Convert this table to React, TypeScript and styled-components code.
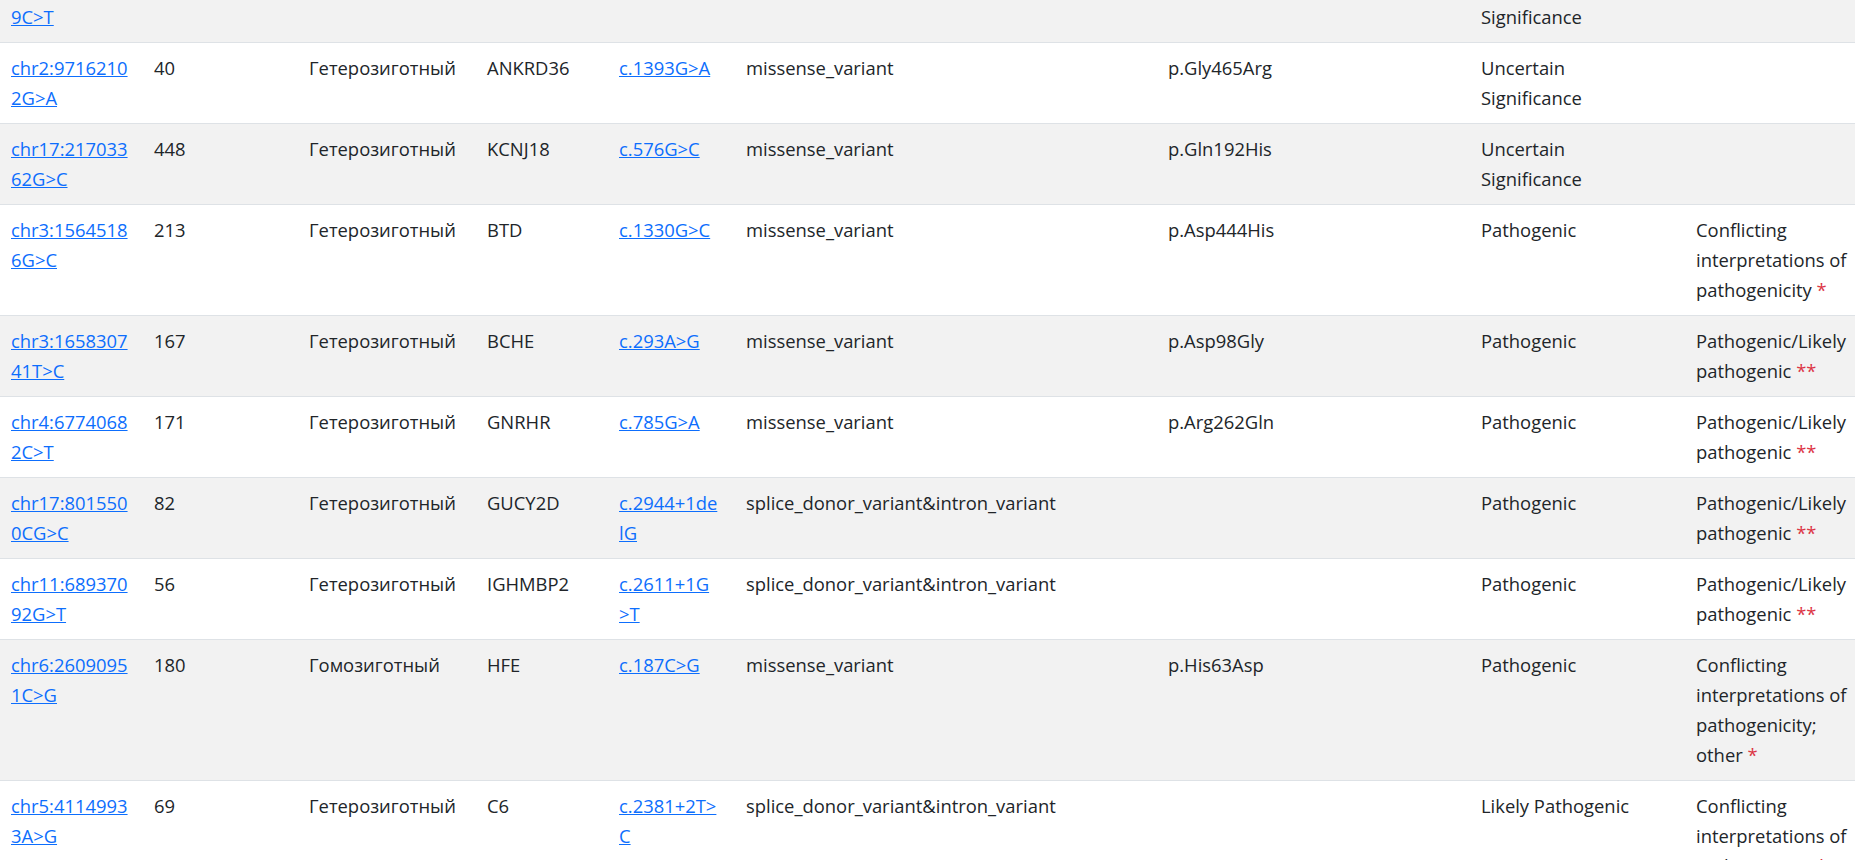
import React from "react";
import styled, { createGlobalStyle } from "styled-components";

const GlobalStyle = createGlobalStyle`
  html, body {
    margin: 0;
    padding: 0;
    background: #ffffff;
    overflow: hidden;
  }
  body {
    font-family: "Open Sans", "Noto Sans", "Liberation Sans", sans-serif;
    font-size: 18.4px;
    line-height: 30px;
    color: #212529;
  }
`;

const Viewport = styled.div`
  width: 100vw;
  height: 100vh;
  overflow: hidden;
`;

const Table = styled.table`
  table-layout: fixed;
  border-collapse: collapse;
  width: 1866px;
  margin-top: -38px;
`;

const Col = styled.col<{ $w: number }>`
  width: ${(p) => p.$w}px;
`;

const Row = styled.tr`
  background: #ffffff;
  &:nth-child(odd) {
    background: #f2f2f2;
  }
`;

const Cell = styled.td<{ $padRight?: number }>`
  vertical-align: top;
  padding: 10px ${(p) => p.$padRight ?? 10}px 10px 11px;
  border-bottom: 1px solid #dee2e6;
  text-align: left;
  word-wrap: break-word;
`;

const VarLink = styled.a`
  color: #0d6efd;
  text-decoration: underline;
  white-space: nowrap;
`;

const Star = styled.span`
  color: #dc3545;
`;

type Variant = {
  pos: string[];
  depth: string;
  zyg: string;
  gene: string;
  hgvs: string[];
  cons: string;
  prot: string;
  sig: string;
  clin: string;
  stars: string;
};

const rows: Variant[] = [
  {
    pos: ["chr1:1187307", "9C>T"],
    depth: "52",
    zyg: "Гетерозиготный",
    gene: "TTLL10",
    hgvs: ["c.1529C>T"],
    cons: "missense_variant",
    prot: "p.Ala510Val",
    sig: "Uncertain Significance",
    clin: "",
    stars: "",
  },
  {
    pos: ["chr2:9716210", "2G>A"],
    depth: "40",
    zyg: "Гетерозиготный",
    gene: "ANKRD36",
    hgvs: ["c.1393G>A"],
    cons: "missense_variant",
    prot: "p.Gly465Arg",
    sig: "Uncertain Significance",
    clin: "",
    stars: "",
  },
  {
    pos: ["chr17:217033", "62G>C"],
    depth: "448",
    zyg: "Гетерозиготный",
    gene: "KCNJ18",
    hgvs: ["c.576G>C"],
    cons: "missense_variant",
    prot: "p.Gln192His",
    sig: "Uncertain Significance",
    clin: "",
    stars: "",
  },
  {
    pos: ["chr3:1564518", "6G>C"],
    depth: "213",
    zyg: "Гетерозиготный",
    gene: "BTD",
    hgvs: ["c.1330G>C"],
    cons: "missense_variant",
    prot: "p.Asp444His",
    sig: "Pathogenic",
    clin: "Conflicting interpretations of pathogenicity",
    stars: "*",
  },
  {
    pos: ["chr3:1658307", "41T>C"],
    depth: "167",
    zyg: "Гетерозиготный",
    gene: "BCHE",
    hgvs: ["c.293A>G"],
    cons: "missense_variant",
    prot: "p.Asp98Gly",
    sig: "Pathogenic",
    clin: "Pathogenic/Likely pathogenic",
    stars: "**",
  },
  {
    pos: ["chr4:6774068", "2C>T"],
    depth: "171",
    zyg: "Гетерозиготный",
    gene: "GNRHR",
    hgvs: ["c.785G>A"],
    cons: "missense_variant",
    prot: "p.Arg262Gln",
    sig: "Pathogenic",
    clin: "Pathogenic/Likely pathogenic",
    stars: "**",
  },
  {
    pos: ["chr17:801550", "0CG>C"],
    depth: "82",
    zyg: "Гетерозиготный",
    gene: "GUCY2D",
    hgvs: ["c.2944+1de", "lG"],
    cons: "splice_donor_variant&intron_variant",
    prot: "",
    sig: "Pathogenic",
    clin: "Pathogenic/Likely pathogenic",
    stars: "**",
  },
  {
    pos: ["chr11:689370", "92G>T"],
    depth: "56",
    zyg: "Гетерозиготный",
    gene: "IGHMBP2",
    hgvs: ["c.2611+1G", ">T"],
    cons: "splice_donor_variant&intron_variant",
    prot: "",
    sig: "Pathogenic",
    clin: "Pathogenic/Likely pathogenic",
    stars: "**",
  },
  {
    pos: ["chr6:2609095", "1C>G"],
    depth: "180",
    zyg: "Гомозиготный",
    gene: "HFE",
    hgvs: ["c.187C>G"],
    cons: "missense_variant",
    prot: "p.His63Asp",
    sig: "Pathogenic",
    clin: "Conflicting interpretations of pathogenicity; other",
    stars: "*",
  },
  {
    pos: ["chr5:4114993", "3A>G"],
    depth: "69",
    zyg: "Гетерозиготный",
    gene: "C6",
    hgvs: ["c.2381+2T>", "C"],
    cons: "splice_donor_variant&intron_variant",
    prot: "",
    sig: "Likely Pathogenic",
    clin: "Conflicting interpretations of pathogenicity",
    stars: "*",
  },
];

const widths = [143, 155, 178, 132, 127, 422, 313, 215, 181];

function Lines({ parts }: { parts: string[] }) {
  return (
    <VarLink href="#">
      {parts.map((p, i) => (
        <React.Fragment key={i}>
          {i > 0 && <br />}
          {p}
        </React.Fragment>
      ))}
    </VarLink>
  );
}

export default function App() {
  return (
    <>
      <GlobalStyle />
      <Viewport>
        <Table>
          <colgroup>
            {widths.map((w, i) => (
              <Col key={i} $w={w} />
            ))}
          </colgroup>
          <tbody>
            {rows.map((r, i) => (
              <Row key={i}>
                <Cell>
                  <Lines parts={r.pos} />
                </Cell>
                <Cell>{r.depth}</Cell>
                <Cell>{r.zyg}</Cell>
                <Cell>{r.gene}</Cell>
                <Cell>
                  <Lines parts={r.hgvs} />
                </Cell>
                <Cell>{r.cons}</Cell>
                <Cell>{r.prot}</Cell>
                <Cell $padRight={40}>{r.sig}</Cell>
                <Cell>
                  {r.clin}
                  {r.stars && (
                    <>
                      {" "}
                      <Star>{r.stars}</Star>
                    </>
                  )}
                </Cell>
              </Row>
            ))}
          </tbody>
        </Table>
      </Viewport>
    </>
  );
}
